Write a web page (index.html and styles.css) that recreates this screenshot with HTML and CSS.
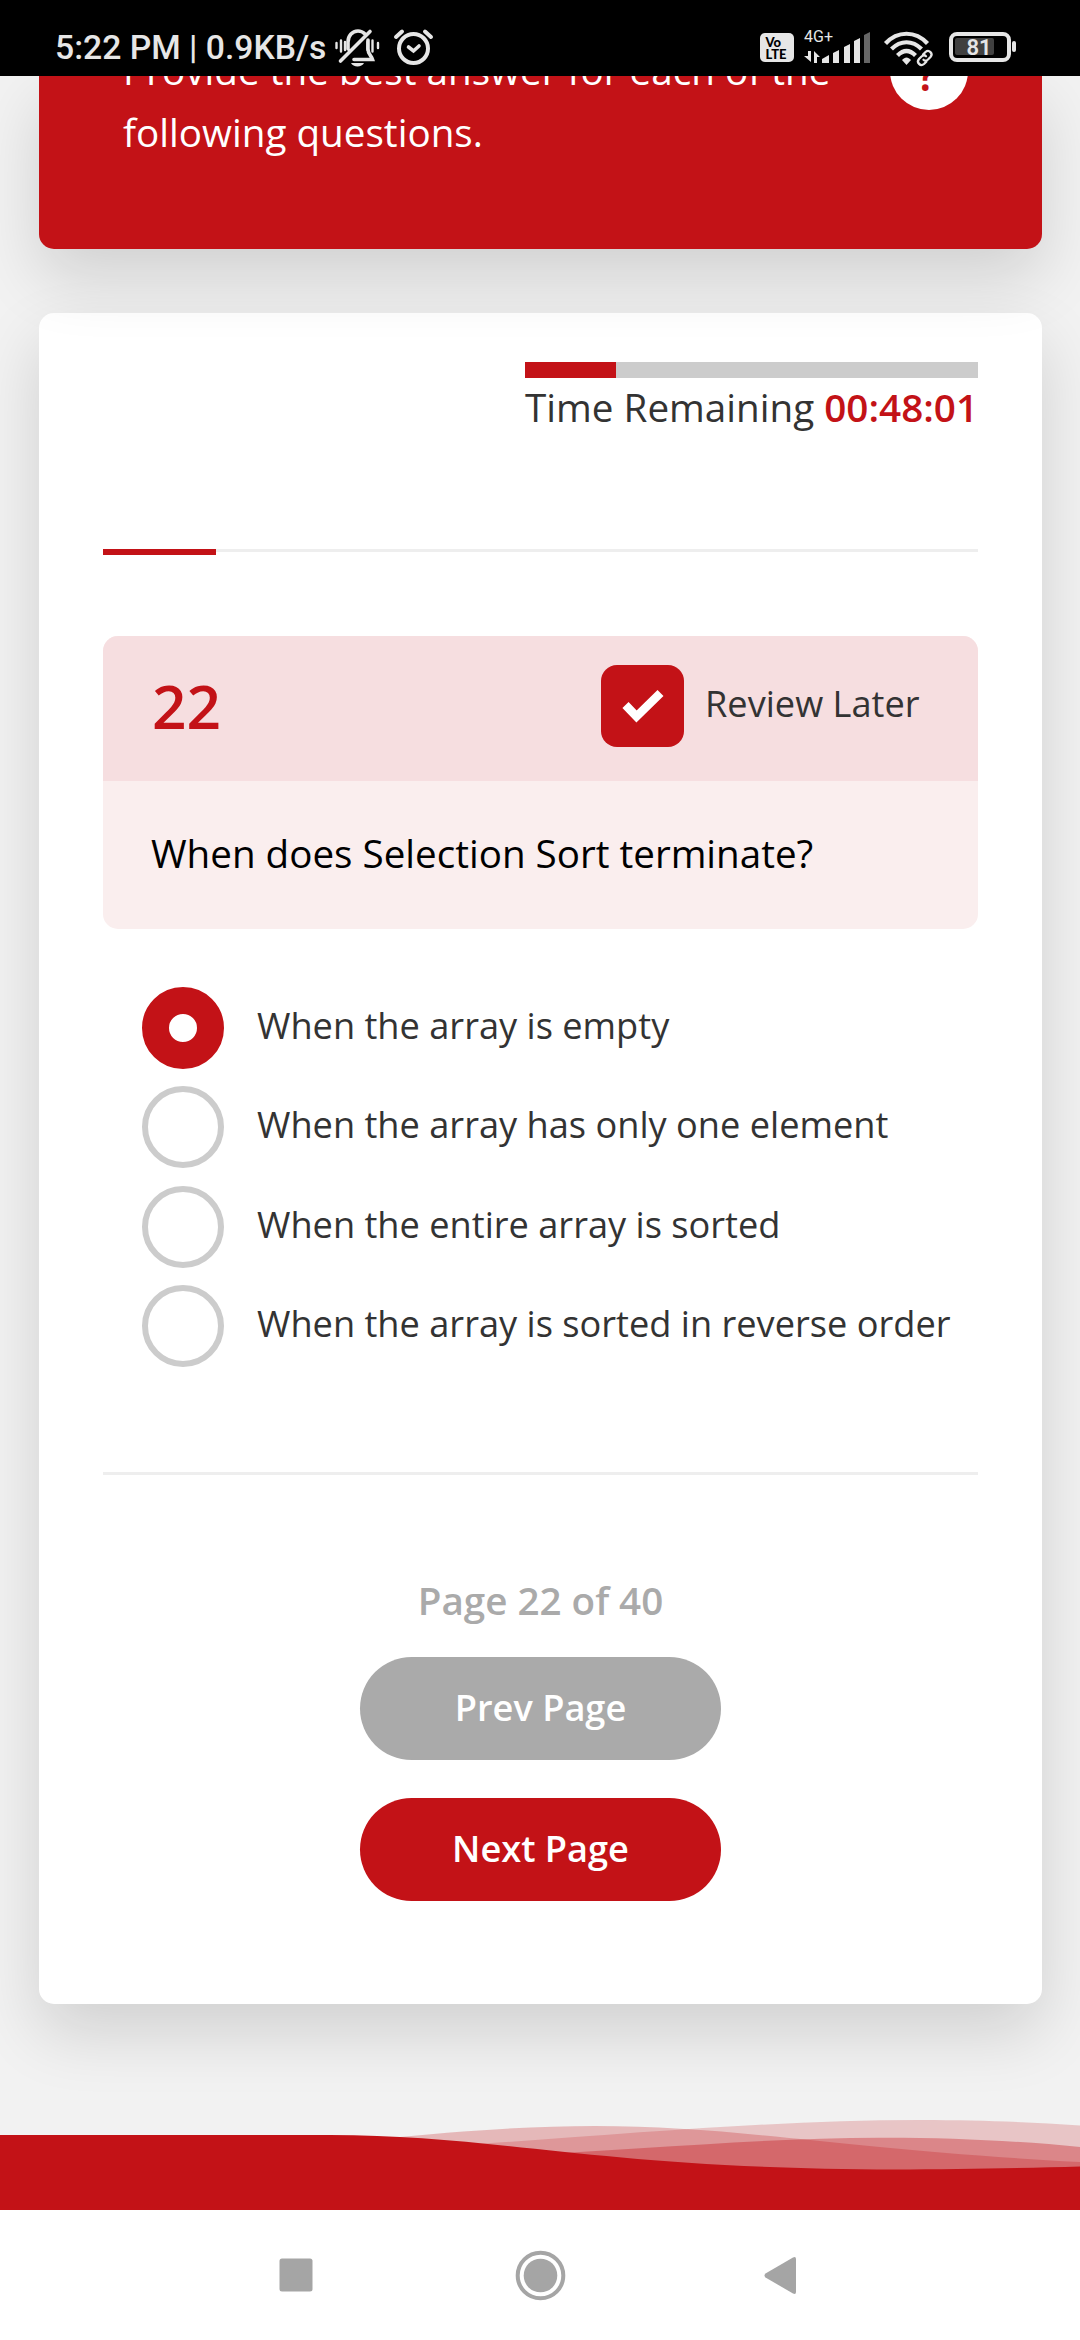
FILE: index.html
```
<!DOCTYPE html>
<html lang="en">
<head>
<meta charset="utf-8">
<title>Quiz</title>
<link rel="stylesheet" href="styles.css">
</head>
<body>
<div class="screen">
  <header class="statusbar">
    <span class="status-text">5:22 PM | 0.9KB/s</span>
    <svg class="status-left" width="104" height="46" viewBox="334 26 104 46" fill="none" stroke="#e6e6e6" stroke-linecap="round">
      <path stroke-width="2.4" d="M336.500 43v5M341 40.500v11M345 42v8M367.500 42v8M372.500 40.500v11M378 43v5"/>
      <path stroke-width="3.600" d="M348 49v-7c0-6 4-11 10-11 3 0 5 1 7 3M340.500 61L370 31.500M368 40v9c0 5 3 6 4.500 10.500H354"/>
      <path fill="#e6e6e6" stroke="none" d="M351 63h13c-2 4.500-11 4.500-13 0z"/>
      <circle cx="413.500" cy="48.500" r="14.500" stroke-width="4"/>
      <path stroke-width="3.600" d="M408.500 47l5 4 5.500-5"/>
      <path stroke-width="4" d="M396 37l6-5.500M425 31.500l6 5.500"/>
    </svg>
    <span class="volte"><span>Vo</span><span>LTE</span></span>
    <span class="signal">
      <span class="net">4G+</span>
      <svg width="68" height="32" viewBox="803 32 68 32" fill="#e6e6e6">
        <path d="M808 51h3v11l-7-6h4zM814 63V51l6 6h-3v6zM822 63v-4l7-4v8zM833 63V53l6-3v13zM844 63V47l6-3v19zM854 63V41l6-3v25z"/>
        <path fill="#666" d="M864 63V35l6-3v31z"/>
      </svg>
    </span>
    <svg class="wifi" width="52" height="38" viewBox="883 30 52 38" fill="none" stroke="#e6e6e6">
      <path stroke-width="4.200" d="M885.500 43.500c12-13 30-13 42 0M891.500 49c9-9 21-9 30 0M897.500 55.500c6-6 12-6 18 0"/>
      <path fill="#e6e6e6" stroke="none" d="M902 60c3-3.500 6-3.500 9 0l-4.500 5z"/>
      <g stroke="#000" stroke-width="6"><path d="M923 58l4-4M920 61l4-4"/></g>
      <g stroke-width="2.300" stroke-linecap="round"><path d="M923 54.500l2.500-2.500c3.500-3 8 1.500 5 5l-2.500 2.500c-1.500 1.300-3.500 1.300-4.500.3M926.500 61.500l-2.500 2.500c-3.500 3-8-1.500-5-5l2.500-2.500c1.500-1.300 3.500-1.300 4.500-.3"/></g>
    </svg>
    <span class="battery"><span class="charge">81</span></span>
  </header>

  <main class="page">
    <section class="intro">
      <p class="intro-text">Provide the best answer for each of the following questions.</p>
      <span class="help">?</span>
    </section>

    <section class="quiz">
      <div class="timer">
        <div class="timer-bar"><div class="timer-fill"></div></div>
        <div class="timer-text">Time Remaining <b>00:48:01</b></div>
      </div>
      <div class="progress"><div class="progress-fill"></div></div>
      <div class="question">
        <div class="question-head">
          <span class="number">22</span>
          <span class="check"><svg width="42" height="36" viewBox="0 0 42 36"><path fill="none" stroke="#fff" stroke-width="8.500" d="M3.500 17l11 11.500L38.500 5"/></svg></span>
          <span class="review">Review Later</span>
        </div>
        <div class="question-body">When does Selection Sort terminate?</div>
      </div>
      <ul class="options">
        <li class="option"><span class="radio on"></span><span>When the array is empty</span></li>
        <li class="option"><span class="radio"></span><span>When the array has only one element</span></li>
        <li class="option"><span class="radio"></span><span>When the entire array is sorted</span></li>
        <li class="option"><span class="radio"></span><span>When the array is sorted in reverse order</span></li>
      </ul>
      <hr class="rule">
      <div class="pager">
        <div class="count">Page 22 of 40</div>
        <button class="btn prev">Prev Page</button>
        <button class="btn next">Next Page</button>
      </div>
    </section>

    <svg class="waves" width="1080" height="110" viewBox="0 2100 1080 110" fill="#c31217">
      <path opacity=".26" d="M380 2139C460 2131 530 2126 595 2126C740 2126 850 2150 1080 2162V2210H380z"/>
      <path opacity=".2" d="M400 2149C600 2137 760 2120 920 2120C980 2120 1030 2122 1080 2125.500V2210H400z"/>
      <path opacity=".35" d="M500 2156C640 2150 760 2138 880 2137.700C950 2137.500 1020 2141 1080 2147V2210H500z"/>
      <path d="M0 2135H330C500 2135 600 2169 895 2169.500C960 2169.500 1030 2168 1080 2166.500V2210H0z"/>
    </svg>
  </main>

  <nav class="navbar">
    <svg width="1080" height="130" viewBox="0 2210 1080 130" fill="#a5a5a5">
      <rect x="279.500" y="2258.500" width="33" height="33" rx="2.500"/>
      <circle cx="540.500" cy="2275.500" r="22.800" fill="none" stroke="#a5a5a5" stroke-width="4"/>
      <circle cx="540.500" cy="2275.500" r="16.800"/>
      <path d="M765.500 2273.500L793 2257.500q3-1.300 3 1.500v33q0 2.800-3 1.500L765.500 2277.500q-2-2 0-4z"/>
    </svg>
  </nav>
</div>
</body>
</html>
```
FILE: styles.css
```
* { box-sizing: border-box; }
body { margin: 0; background: #f2f2f2; font-family: "Open Sans", sans-serif; color: #333; }
.screen { width: 1080px; height: 2340px; display: flex; flex-direction: column; overflow: hidden; }

.statusbar { height: 76px; flex: none; background: #000; color: #e6e6e6; display: flex; align-items: flex-start; padding-left: 55px; font-family: Roboto, sans-serif; z-index: 2; }
.status-text { width: 279px; margin-top: 28px; font-size: 33.700px; line-height: 40px; font-weight: 500; white-space: nowrap; }
.status-left { margin-top: 26px; }
.volte { width: 34px; height: 29px; margin: 33px 0 0 322px; padding: 3px 0 0 5.500px; border-radius: 5px; background: #e6e6e6; color: #000; display: flex; flex-direction: column; font: 900 13px/12px Lato, sans-serif; }
.signal { margin: 30px 0 0 9px; width: 68px; display: flex; flex-direction: column; }
.net { height: 2px; line-height: 14px; font-size: 16px; padding-left: 1px; }
.wifi { margin: 30px 0 0 12px; }
.battery { width: 62px; height: 30px; margin: 32px 0 0 14px; border: 4.500px solid #e6e6e6; border-radius: 8px; display: flex; padding: 2px; position: relative; }
.battery::after { content: ""; position: absolute; left: 59px; top: 5px; width: 4px; height: 11px; border-radius: 2px; background: #e6e6e6; }
.charge { width: 39px; height: 17px; border-radius: 2px; background: #404040; padding-left: 11.500px; font-size: 22px; line-height: 19px; font-weight: 600; }

.page { flex: 1; display: flex; flex-direction: column; padding: 0 38px 0 39px; min-height: 0; }
.intro { height: 173px; flex: none; z-index: 1; overflow: hidden; display: flex; justify-content: space-between; background: #c31217; border-radius: 0 0 15px 15px; box-shadow: 0 28px 66px rgba(0,0,0,.14); padding: 0 74px 0 84px; color: #fff; }
.intro-text { margin: -37px 0 0; width: 740px; font-size: 38.650px; line-height: 62px; }
.help { width: 78px; height: 78px; margin-top: -44px; padding: 1px 4px 0 0; border-radius: 50%; background: #fff; color: #c31217; font-size: 46px; line-height: 80px; font-weight: 600; text-align: center; }

.quiz { height: 1691px; flex: none; margin-top: 64px; padding: 49px 64px 0; display: flex; flex-direction: column; background: #fff; border-radius: 15px; box-shadow: 0 28px 66px rgba(0,0,0,.14); }
.timer { align-self: flex-end; width: 453px; }
.timer-bar { height: 16px; background: #ccc; }
.timer-fill { width: 91px; height: 16px; background: #c31217; }
.timer-text { height: 60px; font-size: 38.650px; line-height: 58px; white-space: nowrap; }
.timer-text b { color: #c31217; font-weight: 600; }
.progress { height: 3px; margin-top: 111px; background: #eee; }
.progress-fill { width: 113px; height: 6px; background: #c31217; }
.question { margin-top: 84px; height: 293px; border-radius: 15px; overflow: hidden; background: #faeeee; }
.question-head { height: 145px; padding-left: 49px; display: flex; background: #f6dee0; }
.number { width: 449px; color: #c31217; font-size: 60.300px; line-height: 140px; font-weight: 600; }
.check { width: 83px; height: 82px; margin-top: 29px; border-radius: 16px; background: #c31217; display: flex; align-items: center; justify-content: center; }
.review { margin-left: 21px; font-size: 36.180px; line-height: 134px; white-space: nowrap; }
.question-body { padding-left: 48px; color: #000; font-size: 38.600px; line-height: 144px; }

.options { list-style: none; margin: 58px 0 0; padding: 0 0 0 39px; display: flex; flex-direction: column; gap: 17.300px; }
.option { height: 82px; display: flex; gap: 33px; font-size: 36.180px; line-height: 76px; white-space: nowrap; }
.radio { width: 82px; height: 82px; border: 6px solid #ccc; border-radius: 50%; }
.radio.on { border: 27px solid #c31217; }
.rule { width: 100%; height: 3px; margin: 105px 0 0; border: 0; background: #eee; }
.pager { margin-top: 97px; display: flex; flex-direction: column; align-items: center; }
.count { height: 85px; color: #aaa; font-size: 38.600px; line-height: 56px; font-weight: 600; }
.btn { width: 361px; height: 103px; padding: 0 0 2px; border: 0; border-radius: 52px; color: #fff; font: 600 36.180px "Open Sans", sans-serif; }
.prev { background: #aaa; }
.next { margin-top: 38px; background: #c31217; }

.waves { flex: none; margin: 96px 0 0 -39px; }
.navbar { height: 130px; flex: none; background: #fff; z-index: 1; }
.navbar svg { display: block; }
```
